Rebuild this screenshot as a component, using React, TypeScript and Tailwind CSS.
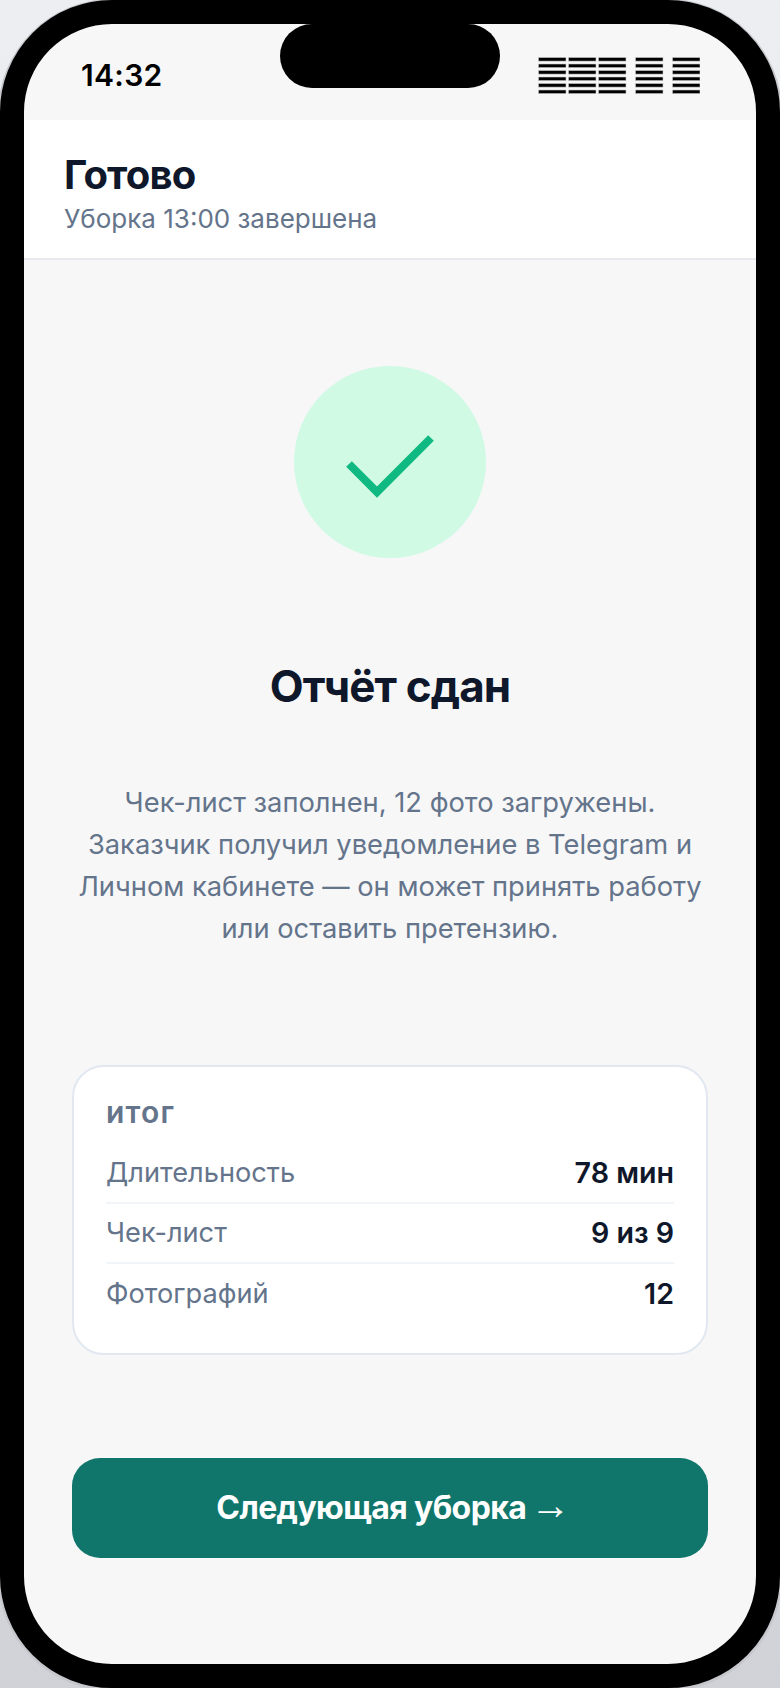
const rowYs = [0, 6.5, 13, 19.5, 26, 32.5];
const groupXs = [0, 30, 60, 97, 134];

// the status icons in the reference are stacks of thin bars
function StatusGlyphs() {
  return (
    <svg width="162" height="37" viewBox="0 0 162 37" className="block">
      {groupXs.map((x) =>
        rowYs.map((y) => (
          <rect key={`${x}-${y}`} x={x + 0.5} y={y + 0.5} width="27.5" height="3.6" fill="#000" stroke="#c9c9c9" strokeWidth="0.6" />
        ))
      )}
    </svg>
  );
}

const rows = [
  { label: "Длительность", value: "78 мин" },
  { label: "Чек-лист", value: "9 из 9" },
  { label: "Фотографий", value: "12" },
];

export default function App() {
  return (
    <div className="w-[780px] h-[1688px] overflow-hidden bg-gradient-to-b from-[#eceef1] to-[#d0d2d7] font-['Inter',sans-serif]">
      <div className="relative w-[780px] h-[1688px] rounded-[112px] border-[24px] border-black bg-[#f7f7f8] overflow-hidden shadow-[0_1px_0_2px_#c6c8cd] flex flex-col">
        {/* Island */}
        <div className="absolute top-0 left-[256px] w-[220px] h-[64px] rounded-[32px] bg-black" />

        {/* Status bar */}
        <div className="h-[96px] shrink-0 flex items-start justify-between pl-[57px] pr-[56px] pt-[33px]">
          <span className="text-[30px] leading-[36px] font-semibold tracking-[0.3px] text-black">14:32</span>
          <StatusGlyphs />
        </div>

        {/* Header */}
        <div className="h-[140px] shrink-0 bg-white border-b-2 border-[#e9e9f0] pl-[40px] pt-[33px]">
          <h1 className="text-[40px] leading-[44px] font-bold tracking-[-0.02em] text-[#0f172a]">Готово</h1>
          <p className="mt-[6px] text-[26px] leading-[32px] text-[#64748b]">Уборка 13:00 завершена</p>
        </div>

        {/* Content */}
        <div className="flex-1 flex flex-col items-center px-[48px]">
          <div className="mt-[106px] w-[192px] h-[192px] rounded-full bg-[#d1fae5] flex items-center justify-center">
            <svg width="192" height="192" viewBox="0 0 192 192" fill="none">
              <polyline points="55,98 83,126 137,72" stroke="#10b981" strokeWidth="8" />
            </svg>
          </div>

          <h2 className="mt-[100px] text-[44px] leading-[56px] font-bold tracking-[-0.02em] text-[#0f172a]">Отчёт сдан</h2>

          <p className="mt-[68px] w-[660px] text-center text-[27.3px] leading-[42px] text-[#64748b]">
            Чек-лист заполнен, 12 фото загружены.
            <br />
            Заказчик получил уведомление в Telegram и
            <br />
            Личном кабинете — он может принять работу
            <br />
            или оставить претензию.
          </p>

          <div className="mt-[115px] w-[636px] h-[290px] rounded-[32px] border-2 border-[#e2e8f0] bg-white px-[32px] pt-[27px]">
            <div className="text-[30px] leading-[36px] font-semibold tracking-[0.04em] text-[#64748b]">итог</div>
            <div className="mt-[14px]">
              {rows.map((row, i) => (
                <div
                  key={row.label}
                  className={`h-[60px] flex items-center justify-between ${i < rows.length - 1 ? "border-b-2 border-[#f1f5f9]" : ""}`}
                >
                  <span className="text-[27.2px] text-[#64748b]">{row.label}</span>
                  <span className="text-[28.6px] font-semibold text-[#0f172a]">{row.value}</span>
                </div>
              ))}
            </div>
          </div>

          <button className="mt-[103px] w-[636px] h-[100px] rounded-[28px] bg-[#10766c] pl-[6px] text-white text-[32px] font-bold tracking-[-0.6px]">
            Следующая уборка <span className="ml-[-3px] font-['Liberation_Sans',sans-serif] font-bold text-[40px] leading-none">→</span>
          </button>
        </div>
      </div>
    </div>
  );
}
